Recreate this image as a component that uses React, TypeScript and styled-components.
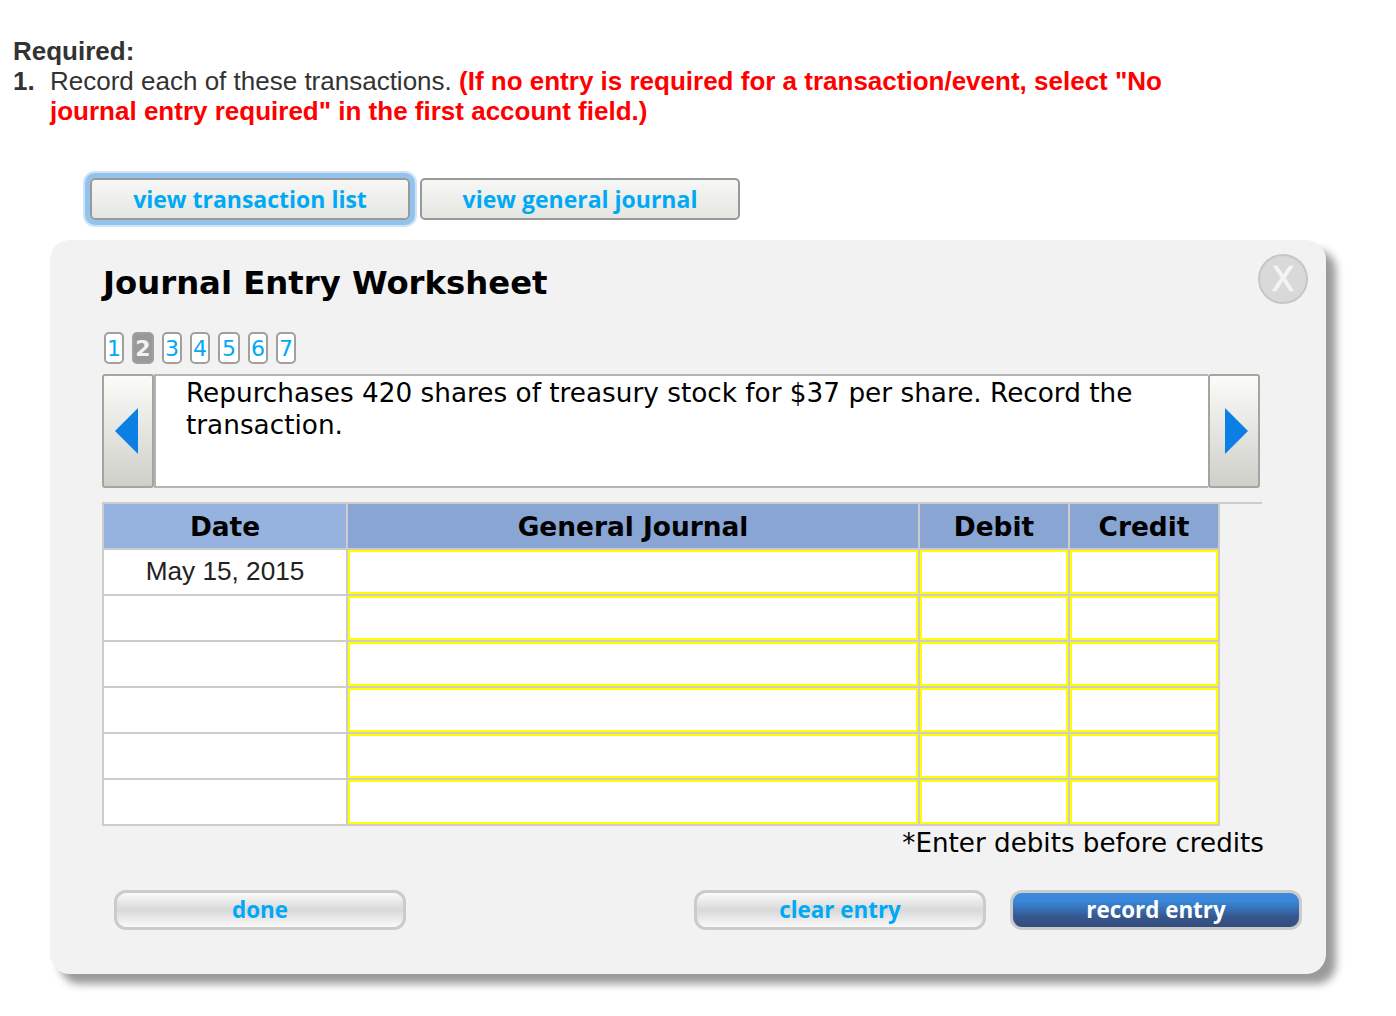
import { Fragment } from 'react';
import styled, { createGlobalStyle } from 'styled-components';

const GlobalStyle = createGlobalStyle`
  html, body {
    margin: 0;
    padding: 0;
    background: #fff;
  }
  body {
    font-family: "DejaVu Sans", Verdana, sans-serif;
  }
`;

const Page = styled.div`
  width: 1396px;
  height: 1016px;
  overflow: hidden;
  padding-top: 36px;
  box-sizing: border-box;
`;

const Required = styled.div`
  margin-left: 13px;
  width: 1200px;
  font-family: "Liberation Sans", Arial, sans-serif;
  font-size: 26px;
  line-height: 30px;
  color: #333;
`;

const Step = styled.div`
  display: flex;
`;

const StepNumber = styled.b`
  width: 37px;
  flex: none;
`;

const Red = styled.b`
  color: #f00;
`;

const TopTabs = styled.div`
  display: flex;
  gap: 10px;
  margin: 52px 0 20px 90px;
`;

const TabButton = styled.button<{ $focused?: boolean }>`
  width: 320px;
  height: 42px;
  padding: 0 0 1px;
  box-sizing: border-box;
  border: 2px solid #999;
  border-radius: 5px;
  background: linear-gradient(#f7f7f5, #e5e5e1);
  color: #00a9f5;
  font-family: "Open Sans", sans-serif;
  font-size: 23px;
  font-weight: bold;
  box-shadow: ${(p) => (p.$focused ? '0 0 0 5px #93c3ec, 0 0 0 7px #cfe4f6' : 'none')};
`;

const Panel = styled.div`
  margin-left: 50px;
  width: 1276px;
  height: 734px;
  box-sizing: border-box;
  padding: 14px 18px 0 52px;
  background: #f2f2f2;
  border-radius: 20px;
  box-shadow: 10px 10px 8px #9a9a9a;
`;

const PanelHead = styled.div`
  display: flex;
  justify-content: space-between;
  align-items: flex-start;
  height: 78px;
`;

const Title = styled.h1`
  margin: 9px 0 0 1px;
  font-size: 32.3px;
  line-height: 40px;
  font-weight: bold;
  color: #000;
`;

const Close = styled.div`
  width: 50px;
  height: 50px;
  box-sizing: border-box;
  border: 2px solid #c6c6c6;
  border-radius: 50%;
  background: #d9d9d9;
  display: flex;
  align-items: center;
  justify-content: center;
  color: #f4f4f4;
  font-size: 34px;
  line-height: 1;
  -webkit-text-stroke: 0.7px #f4f4f4;
`;

const Pager = styled.div`
  display: flex;
  gap: 8px;
  margin-left: 2px;
  height: 42px;
`;

const PageChip = styled.div<{ $active?: boolean; $wide?: boolean }>`
  width: ${(p) => (p.$wide ? 22 : 20)}px;
  height: 32px;
  box-sizing: border-box;
  border: 2px solid #a0a0a0;
  border-radius: 5px;
  background: ${(p) => (p.$active ? '#999' : '#fff')};
  color: ${(p) => (p.$active ? '#f2f2f2' : '#00a9f5')};
  font-size: 22px;
  font-weight: ${(p) => (p.$active ? 'bold' : 'normal')};
  line-height: 30px;
  text-align: center;
`;

const Prompt = styled.div`
  display: flex;
  width: 1158px;
  height: 114px;
`;

const ArrowButton = styled.div<{ $next?: boolean }>`
  width: 52px;
  flex: none;
  box-sizing: border-box;
  border: 2px solid #a5a5a0;
  border-radius: 3px;
  background: linear-gradient(#fbfbf8, #cfcfca);
  display: flex;
  align-items: center;
  justify-content: center;
  padding: ${(p) => (p.$next ? '0 0 0 3px' : '0 3px 0 0')};
`;

const PromptText = styled.div`
  flex: 1;
  box-sizing: border-box;
  padding: 1px 50px 0 30px;
  background: #fff;
  border-top: 2px solid #b4b4b4;
  border-bottom: 2px solid #b4b4b4;
  border-left: 2px solid #b4b4b4;
  font-size: 26.3px;
  line-height: 32px;
  color: #000;
`;

const Divider = styled.div`
  width: 1160px;
  margin-top: 14px;
  border-top: 2px solid #ccc;
`;

const Sheet = styled.div`
  display: grid;
  grid-template-columns: 242px 570px 148px 148px;
  grid-auto-rows: 44px;
  gap: 2px;
  width: 1118px;
  box-sizing: border-box;
  padding: 0 2px 2px;
  background: #ccc;
`;

const HeadCell = styled.div<{ $light?: boolean }>`
  background: ${(p) => (p.$light ? '#95b3de' : '#88a5d3')};
  color: #000;
  font-size: 26.4px;
  font-weight: bold;
  padding-top: 1px;
  display: flex;
  align-items: center;
  justify-content: center;
`;

const DateCell = styled.div`
  background: #fff;
  color: #222;
  font-family: "Liberation Sans", Arial, sans-serif;
  font-size: 26.2px;
  padding-bottom: 2px;
  display: flex;
  align-items: center;
  justify-content: center;
`;

const EntryCell = styled.div`
  background: #fff;
  border: 2px solid #ffff00;
`;

const Footnote = styled.div`
  width: 1162px;
  text-align: right;
  font-size: 26.2px;
  line-height: 34px;
  color: #000;
`;

const Actions = styled.div`
  display: flex;
  margin: 30px 0 0 12px;
  width: 1188px;
`;

const ActionButton = styled.button<{ $primary?: boolean }>`
  width: 292px;
  height: 40px;
  padding: 0 0 2px;
  box-sizing: border-box;
  border: 3px solid #cbcbcb;
  border-radius: 12px;
  background: ${(p) =>
    p.$primary
      ? 'linear-gradient(#3a8ade 0%, #3a86d8 25%, #35588f 70%, #354c7c 100%)'
      : 'linear-gradient(#fbfbfb 0%, #d8d8d8 50%, #fafafa 100%)'};
  color: ${(p) => (p.$primary ? '#fff' : '#00a9f5')};
  font-family: "Open Sans", sans-serif;
  font-size: 22.4px;
  font-weight: bold;
  &:nth-child(2) {
    margin-left: auto;
    margin-right: 24px;
  }
`;

const chips = ['1', '2', '3', '4', '5', '6', '7'];
const rows = [0, 1, 2, 3, 4, 5];

export default function App() {
  return (
    <Page>
      <GlobalStyle />
      <Required>
        <b>Required:</b>
        <Step>
          <StepNumber>1.</StepNumber>
          <span>
            Record each of these transactions.{' '}
            <Red>
              (If no entry is required for a transaction/event, select "No journal entry required" in the first account
              field.)
            </Red>
          </span>
        </Step>
      </Required>
      <TopTabs>
        <TabButton $focused>view transaction list</TabButton>
        <TabButton>view general journal</TabButton>
      </TopTabs>
      <Panel>
        <PanelHead>
          <Title>Journal Entry Worksheet</Title>
          <Close>X</Close>
        </PanelHead>
        <Pager>
          {chips.map((c) => (
            <PageChip key={c} $active={c === '2'} $wide={c === '2' || c === '5'}>
              {c}
            </PageChip>
          ))}
        </Pager>
        <Prompt>
          <ArrowButton>
            <svg width="26" height="48" viewBox="0 0 26 48">
              <path d="M24 1 L1 24 L24 47 Z" fill="#0b7fe3" />
            </svg>
          </ArrowButton>
          <PromptText>Repurchases 420 shares of treasury stock for $37 per share. Record the transaction.</PromptText>
          <ArrowButton $next>
            <svg width="26" height="48" viewBox="0 0 26 48">
              <path d="M2 1 L25 24 L2 47 Z" fill="#0b7fe3" />
            </svg>
          </ArrowButton>
        </Prompt>
        <Divider />
        <Sheet>
          <HeadCell $light>Date</HeadCell>
          <HeadCell>General Journal</HeadCell>
          <HeadCell>Debit</HeadCell>
          <HeadCell>Credit</HeadCell>
          {rows.map((r) => (
            <Fragment key={r}>
              <DateCell>{r === 0 ? 'May 15, 2015' : ''}</DateCell>
              <EntryCell />
              <EntryCell />
              <EntryCell />
            </Fragment>
          ))}
        </Sheet>
        <Footnote>*Enter debits before credits</Footnote>
        <Actions>
          <ActionButton>done</ActionButton>
          <ActionButton>clear entry</ActionButton>
          <ActionButton $primary>record entry</ActionButton>
        </Actions>
      </Panel>
    </Page>
  );
}
